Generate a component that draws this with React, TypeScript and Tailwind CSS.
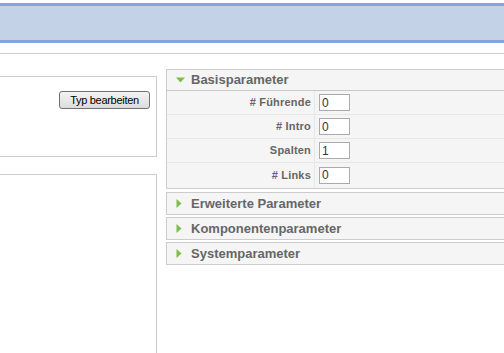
import React from 'react';

interface ParamRow {
  label: string;
  value: string;
}

const rows: ParamRow[] = [
  { label: '# Führende', value: '0' },
  { label: '# Intro', value: '0' },
  { label: 'Spalten', value: '1' },
  { label: '# Links', value: '0' },
];

const collapsed = ['Erweiterte Parameter', 'Komponentenparameter', 'Systemparameter'];

const DownArrow = () => (
  <svg width="9" height="6" viewBox="0 0 9 6" className="shrink-0">
    <path d="M0 0.5 H9 L4.5 5.5 Z" fill="#7cbf4a" />
  </svg>
);

const RightArrow = () => (
  <svg width="6" height="9" viewBox="0 0 6 9" className="shrink-0">
    <path d="M0.5 0 L5.5 4.5 L0.5 9 Z" fill="#7cbf4a" />
  </svg>
);

export default function App() {
  return (
    <div className="w-[504px] h-[353px] overflow-hidden bg-white font-['Liberation_Sans',Arial,sans-serif]">
      {/* top band */}
      <div className="mt-[3px] h-[40px] bg-[#c3d2e6] border-y-[3px] border-[#80a6dc]" />
      <div className="mt-[10px] h-px bg-[#cccccc]" />

      <div className="flex">
        {/* left column */}
        <div className="w-[157px] shrink-0 flex flex-col">
          <div className="mt-[22px] h-[81px] border border-l-0 border-[#cccccc] flex justify-end items-start pt-[14px] pr-[6px]">
            <button className="h-[18px] w-[91px] rounded-[3px] border border-[#707070] bg-gradient-to-b from-[#f4f4f4] to-[#dcdcdc] text-[11px] tracking-[-0.3px] text-black leading-none">
              Typ bearbeiten
            </button>
          </div>
          <div className="mt-[17px] h-[200px] border border-l-0 border-[#cccccc]" />
        </div>

        {/* right column */}
        <div className="ml-[9px] flex-1 mt-[15px] flex flex-col gap-[2px]">
          <div className="mb-px border border-r-0 border-[#cccccc] bg-[#f5f5f5]">
            <div className="h-[21px] flex items-center gap-[6px] pl-[9px] border-b border-[#c8c8c8]">
              <DownArrow />
              <span className="text-[13px] font-bold text-[#666666]">Basisparameter</span>
            </div>
            <div className="pb-px">
              {rows.map((r, i) => (
                <div
                  key={r.label}
                  className={`flex h-[24px] ${i < rows.length - 1 ? 'border-b border-[#e6e6e6]' : ''}`}
                >
                  <div className="w-[148px] shrink-0 border-r border-[#e6e6e6] flex items-center justify-end pr-[3px] text-[11px] font-bold text-[#666666] tracking-[0.2px]">
                    {r.label}
                  </div>
                  <div className="flex items-center pl-[4px]">
                    <div className="w-[31px] h-[17px] border border-[#aaaaaa] bg-white flex items-center pl-[2px] text-[12px] text-[#333333]">
                      {r.value}
                    </div>
                  </div>
                </div>
              ))}
            </div>
          </div>

          {collapsed.map((title) => (
            <div
              key={title}
              className="h-[23px] border border-r-0 border-[#cccccc] bg-[#f5f5f5] flex items-center gap-[9px] pl-[9px]"
            >
              <RightArrow />
              <span className="text-[13px] font-bold text-[#666666]">{title}</span>
            </div>
          ))}
        </div>
      </div>
    </div>
  );
}
